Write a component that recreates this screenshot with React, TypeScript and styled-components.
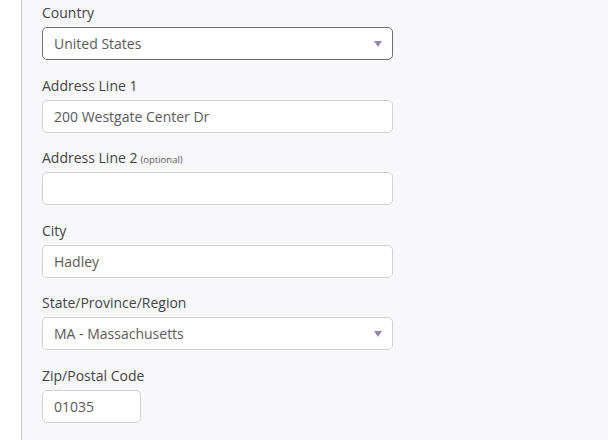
import React from "react";
import styled, { createGlobalStyle } from "styled-components";

const GlobalStyle = createGlobalStyle`
  html, body {
    margin: 0;
    padding: 0;
    background: #ffffff;
    font-family: "Open Sans", "Liberation Sans", sans-serif;
  }
`;

const Page = styled.div`
  display: flex;
  width: 608px;
  height: 440px;
  overflow: hidden;
`;

const Gutter = styled.div`
  width: 21px;
  flex-shrink: 0;
  background: #ffffff;
  border-right: 1px solid #c9c9c9;
`;

const Panel = styled.div`
  flex: 1;
  background: #f8f7fa;
  padding: 3px 0 0 20px;
`;

const Field = styled.div`
  display: flex;
  flex-direction: column;
  gap: 4px;
  margin-bottom: 15.6px;
`;

const Label = styled.label`
  font-size: 14px;
  line-height: 20px;
  height: 20px;
  color: #444;
`;

const Optional = styled.span`
  font-size: 9.5px;
  color: #5a5a5a;
  margin-left: 3px;
`;

const Box = styled.div<{ $width?: number; $focused?: boolean }>`
  box-sizing: border-box;
  width: ${(p) => p.$width ?? 351}px;
  height: 33px;
  background: #ffffff;
  border: 1px solid ${(p) => (p.$focused ? "#6f6f6f" : "#d2d2d2")};
  border-radius: 5px;
  display: flex;
  align-items: center;
  padding: 0 10px 0 11px;
  font-size: 14px;
  color: #5a5a5a;
`;

const Value = styled.span`
  flex: 1;
`;

const Arrow = styled.span`
  width: 0;
  height: 0;
  border-left: 4px solid transparent;
  border-right: 4px solid transparent;
  border-top: 6px solid #9b85ae;
`;

export default function App() {
  return (
    <Page>
      <GlobalStyle />
      <Gutter />
      <Panel>
        <Field>
          <Label>Country</Label>
          <Box $focused>
            <Value>United States</Value>
            <Arrow />
          </Box>
        </Field>
        <Field>
          <Label>Address Line 1</Label>
          <Box>
            <Value>200 Westgate Center Dr</Value>
          </Box>
        </Field>
        <Field>
          <Label>
            Address Line 2<Optional>(optional)</Optional>
          </Label>
          <Box />
        </Field>
        <Field>
          <Label>City</Label>
          <Box>
            <Value>Hadley</Value>
          </Box>
        </Field>
        <Field>
          <Label>State/Province/Region</Label>
          <Box>
            <Value>MA - Massachusetts</Value>
            <Arrow />
          </Box>
        </Field>
        <Field>
          <Label>Zip/Postal Code</Label>
          <Box $width={99}>
            <Value>01035</Value>
          </Box>
        </Field>
      </Panel>
    </Page>
  );
}
